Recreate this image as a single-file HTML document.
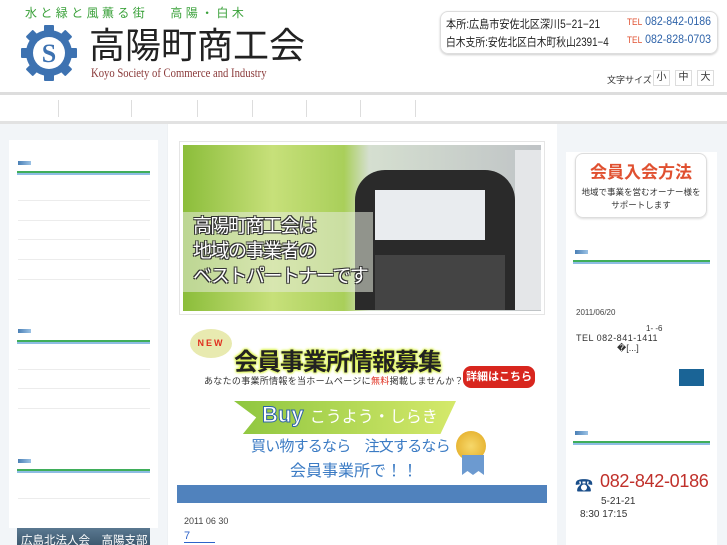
<!DOCTYPE html>
<html><head><meta charset="utf-8">
<style>
*{margin:0;padding:0;box-sizing:border-box}
body{width:727px;height:545px;overflow:hidden;position:relative;background:#fff;font-family:"Liberation Sans","Noto Sans CJK JP",sans-serif;color:#333}
.a{position:absolute}
.hb{position:absolute;width:13px;height:4px;background:linear-gradient(90deg,#4a7fb5,#9cc3e6)}
.hl{position:absolute;height:4px;border-top:2px solid #3fae5a;background:#8dbde3}
.dl{position:absolute;height:1px;background:#ececec}
</style></head><body>
<!-- header -->
<div class="a" style="left:25px;top:4px;font-size:12px;color:#3aa13a;letter-spacing:3.4px;white-space:nowrap">水と緑と風薫る街　 高陽・白木</div>
<svg class="a" style="left:20px;top:24px" width="58" height="58" viewBox="0 0 58 58">
<g fill="#3d72b1">
<circle cx="29" cy="29" r="23"/>
<g id="t"><rect x="24" y="1" width="10" height="9" rx="1"/></g>
<use href="#t" transform="rotate(45 29 29)"/><use href="#t" transform="rotate(90 29 29)"/><use href="#t" transform="rotate(135 29 29)"/><use href="#t" transform="rotate(180 29 29)"/><use href="#t" transform="rotate(225 29 29)"/><use href="#t" transform="rotate(270 29 29)"/><use href="#t" transform="rotate(315 29 29)"/>
</g>
<circle cx="29" cy="29" r="16" fill="#fff"/>
<text x="29" y="38" text-anchor="middle" font-family="Liberation Serif,serif" font-weight="bold" font-size="26" fill="#3d72b1">S</text>
</svg>
<div class="a" style="left:89px;top:27px;font-size:36px;line-height:38px;color:#222;letter-spacing:0;white-space:nowrap">高陽町商工会</div>
<div class="a" style="left:91px;top:66px;font-family:'Liberation Serif',serif;font-size:13px;line-height:14px;color:#8a3a3a;white-space:nowrap;transform:scaleX(.82);transform-origin:left">Koyo Society of Commerce and Industry</div>
<div class="a" style="left:440px;top:11px;width:278px;height:43px;border:1px solid #ddd;border-radius:8px;box-shadow:0 1px 2px #ccc"></div>
<div class="a" style="left:446px;top:16px;font-size:11.5px;color:#222;white-space:nowrap;transform:scaleX(.88);transform-origin:left">本所:広島市安佐北区深川5−21−21</div>
<div class="a" style="left:446px;top:34px;font-size:11.5px;color:#222;white-space:nowrap;transform:scaleX(.85);transform-origin:left">白木支所:安佐北区白木町秋山2391−4</div>
<div class="a" style="left:627px;top:16px;font-size:11.5px;color:#2e63a9;white-space:nowrap;transform:scaleX(.92);transform-origin:left"><span style="color:#e05030;font-size:9px">TEL</span> 082-842-0186</div>
<div class="a" style="left:627px;top:34px;font-size:11.5px;color:#2e63a9;white-space:nowrap;transform:scaleX(.92);transform-origin:left"><span style="color:#e05030;font-size:9px">TEL</span> 082-828-0703</div>
<div class="a" style="left:607px;top:73px;font-size:9px;color:#333;white-space:nowrap">文字サイズ</div>
<div class="a" style="left:653px;top:70px;width:17px;height:16px;border:1px solid #ddd;font-size:10px;text-align:center;line-height:14px">小</div>
<div class="a" style="left:675px;top:70px;width:17px;height:16px;border:1px solid #ddd;font-size:10px;text-align:center;line-height:14px">中</div>
<div class="a" style="left:697px;top:70px;width:17px;height:16px;border:1px solid #ddd;font-size:10px;text-align:center;line-height:14px">大</div>
<div class="a" style="left:0;top:92px;width:727px;height:3px;background:#ddd"></div>
<div class="a" style="left:0;top:121px;width:727px;height:3px;background:#e2e2e2"></div>
<div class="a" style="left:58px;top:100px;width:1px;height:17px;background:#ddd"></div>
<div class="a" style="left:131px;top:100px;width:1px;height:17px;background:#ddd"></div>
<div class="a" style="left:197px;top:100px;width:1px;height:17px;background:#ddd"></div>
<div class="a" style="left:252px;top:100px;width:1px;height:17px;background:#ddd"></div>
<div class="a" style="left:306px;top:100px;width:1px;height:17px;background:#ddd"></div>
<div class="a" style="left:360px;top:100px;width:1px;height:17px;background:#ddd"></div>
<div class="a" style="left:415px;top:100px;width:1px;height:17px;background:#ddd"></div>
<!-- left col -->
<div class="a" style="left:0;top:124px;width:167px;height:421px;background:#f2f5f8"></div>
<div class="a" style="left:9px;top:140px;width:149px;height:388px;background:#fff"></div>
<div class="hb" style="left:18px;top:161px"></div><div class="hl" style="left:17px;top:171px;width:133px"></div>
<div class="dl" style="left:18px;top:200px;width:132px"></div><div class="dl" style="left:18px;top:220px;width:132px"></div><div class="dl" style="left:18px;top:239px;width:132px"></div><div class="dl" style="left:18px;top:259px;width:132px"></div><div class="dl" style="left:18px;top:279px;width:132px"></div>
<div class="hb" style="left:18px;top:329px"></div><div class="hl" style="left:17px;top:340px;width:133px"></div>
<div class="dl" style="left:18px;top:369px;width:132px"></div><div class="dl" style="left:18px;top:388px;width:132px"></div><div class="dl" style="left:18px;top:408px;width:132px"></div>
<div class="hb" style="left:18px;top:459px"></div><div class="hl" style="left:17px;top:469px;width:133px"></div>
<div class="dl" style="left:18px;top:498px;width:132px"></div>
<div class="a" style="left:17px;top:528px;width:133px;height:17px;background:linear-gradient(#5a7890,#3e5a70);color:#fff;font-size:11.5px;padding:4px 0 0 4px;white-space:nowrap;overflow:hidden">広島北法人会　高陽支部</div>
<!-- center -->
<div class="a" style="left:167px;top:124px;width:1px;height:421px;background:#eef1f4"></div>
<div class="a" style="left:179px;top:141px;width:366px;height:174px;border:1px solid #e5e5e5"></div>
<div class="a" style="left:183px;top:145px;width:358px;height:166px;background:linear-gradient(90deg,#8bbd3a 0%,#c7e07a 25%,#a9cf5a 45%,#d5dfd0 52%,#bfc3c6 100%)"></div>
<div class="a" style="left:355px;top:170px;width:160px;height:140px;background:#2a2a2a;border-radius:30px 30px 0 0"></div>
<div class="a" style="left:375px;top:190px;width:110px;height:50px;background:#e9ecef"></div>
<div class="a" style="left:375px;top:255px;width:130px;height:55px;background:#444"></div>
<div class="a" style="left:515px;top:150px;width:26px;height:160px;background:#e4e6e8"></div>
<div class="a" style="left:183px;top:212px;width:190px;height:80px;background:rgba(230,235,220,.55)"></div>
<div class="a" style="left:193px;top:214px;font-size:19px;line-height:25px;color:#fff;letter-spacing:-1.5px;text-shadow:-1px -1px 0 #333,1px -1px 0 #333,-1px 1px 0 #333,1px 1px 0 #333;white-space:nowrap">高陽町商工会は<br>地域の事業者の<br>ベストパートナーです</div>
<div class="a" style="left:190px;top:329px;width:42px;height:29px;background:#e8eab0;border-radius:50%;color:#e03020;font-size:9px;font-weight:bold;letter-spacing:2px;text-align:center;line-height:29px">NEW</div>
<div class="a" style="left:234px;top:342px;font-size:24px;font-weight:bold;color:#222;letter-spacing:-1px;white-space:nowrap;text-shadow:0 0 3px #d8f040,0 0 3px #d8f040,0 0 2px #d8f040">会員事業所情報募集</div>
<div class="a" style="left:204px;top:374px;font-size:9px;color:#333;white-space:nowrap;letter-spacing:.3px">あなたの事業所情報を当ホームページに<span style="color:#e03020">無料</span>掲載しませんか？</div>
<div class="a" style="left:463px;top:366px;width:72px;height:22px;background:#d8261e;border-radius:8px;color:#fff;font-size:11px;text-align:center;line-height:22px;font-weight:bold">詳細はこちら</div>
<div class="a" style="left:234px;top:401px;width:222px;height:33px;background:linear-gradient(90deg,#8ec63f,#d5e96b);clip-path:polygon(0 0,100% 0,93% 100%,4% 100%,10% 50%)"></div>
<div class="a" style="left:262px;top:402px;font-size:22px;font-weight:bold;color:#fff;-webkit-text-stroke:1px #2e63a9;white-space:nowrap">Buy <span style="font-size:16px;font-weight:normal;-webkit-text-stroke:0">こうよう・しらき</span></div>
<div class="a" style="left:251px;top:435px;font-size:15px;color:#3b7bc4;white-space:nowrap;letter-spacing:-.8px">買い物するなら　注文するなら</div>
<div class="a" style="left:290px;top:457px;font-size:16px;color:#3b7bc4;white-space:nowrap">会員事業所で！！</div>
<div class="a" style="left:456px;top:431px;width:30px;height:30px;border-radius:50%;background:radial-gradient(#f6d86a,#e2a820)"></div>
<div class="a" style="left:462px;top:455px;width:22px;height:20px;background:#6c9ad0;clip-path:polygon(0 0,100% 0,100% 100%,75% 80%,50% 100%,25% 80%,0 100%)"></div>
<div class="a" style="left:177px;top:485px;width:370px;height:18px;background:#5082bd"></div>
<div class="a" style="left:184px;top:516px;font-size:9px;color:#444">2011 06 30</div>
<div class="a" style="left:184px;top:531px;width:31px;font-size:11px;color:#2e63c9;border-bottom:1px solid #2e63c9;line-height:11px">7</div>
<!-- right col -->
<div class="a" style="left:557px;top:124px;width:170px;height:421px;background:#f2f5f8"></div>
<div class="a" style="left:566px;top:152px;width:151px;height:393px;background:#fff"></div>
<div class="a" style="left:575px;top:153px;width:132px;height:65px;border:1px solid #ddd;border-radius:8px;box-shadow:0 1px 2px #ddd"></div>
<div class="a" style="left:575px;top:158px;width:132px;text-align:center;font-size:17px;font-weight:bold;color:#e05030">会員入会方法</div>
<div class="a" style="left:575px;top:186px;width:132px;text-align:center;font-size:8.5px;line-height:13px;color:#333">地域で事業を営むオーナー様を<br>サポートします</div>
<div class="hb" style="left:575px;top:250px"></div><div class="hl" style="left:573px;top:260px;width:137px"></div>
<div class="a" style="left:576px;top:308px;font-size:8px;color:#444">2011/06/20</div>
<div class="a" style="left:646px;top:324px;font-size:8px;color:#333">1- -6</div>
<div class="a" style="left:576px;top:333px;font-size:9px;color:#333;letter-spacing:.5px">TEL 082-841-1411</div>
<div class="a" style="left:617px;top:343px;font-size:9px;color:#333">�[...]</div>
<div class="a" style="left:679px;top:369px;width:25px;height:17px;background:#1a6496"></div>
<div class="hb" style="left:575px;top:431px"></div><div class="hl" style="left:573px;top:441px;width:137px"></div>
<div class="a" style="left:575px;top:472px;font-size:18px;color:#1a4e8a">☎</div>
<div class="a" style="left:600px;top:471px;font-size:18px;color:#c0302a;white-space:nowrap;letter-spacing:-.3px">082-842-0186</div>
<div class="a" style="left:601px;top:496px;font-size:10px;color:#333">5-21-21</div>
<div class="a" style="left:580px;top:509px;font-size:10px;color:#333">8:30 17:15</div>
</body></html>
